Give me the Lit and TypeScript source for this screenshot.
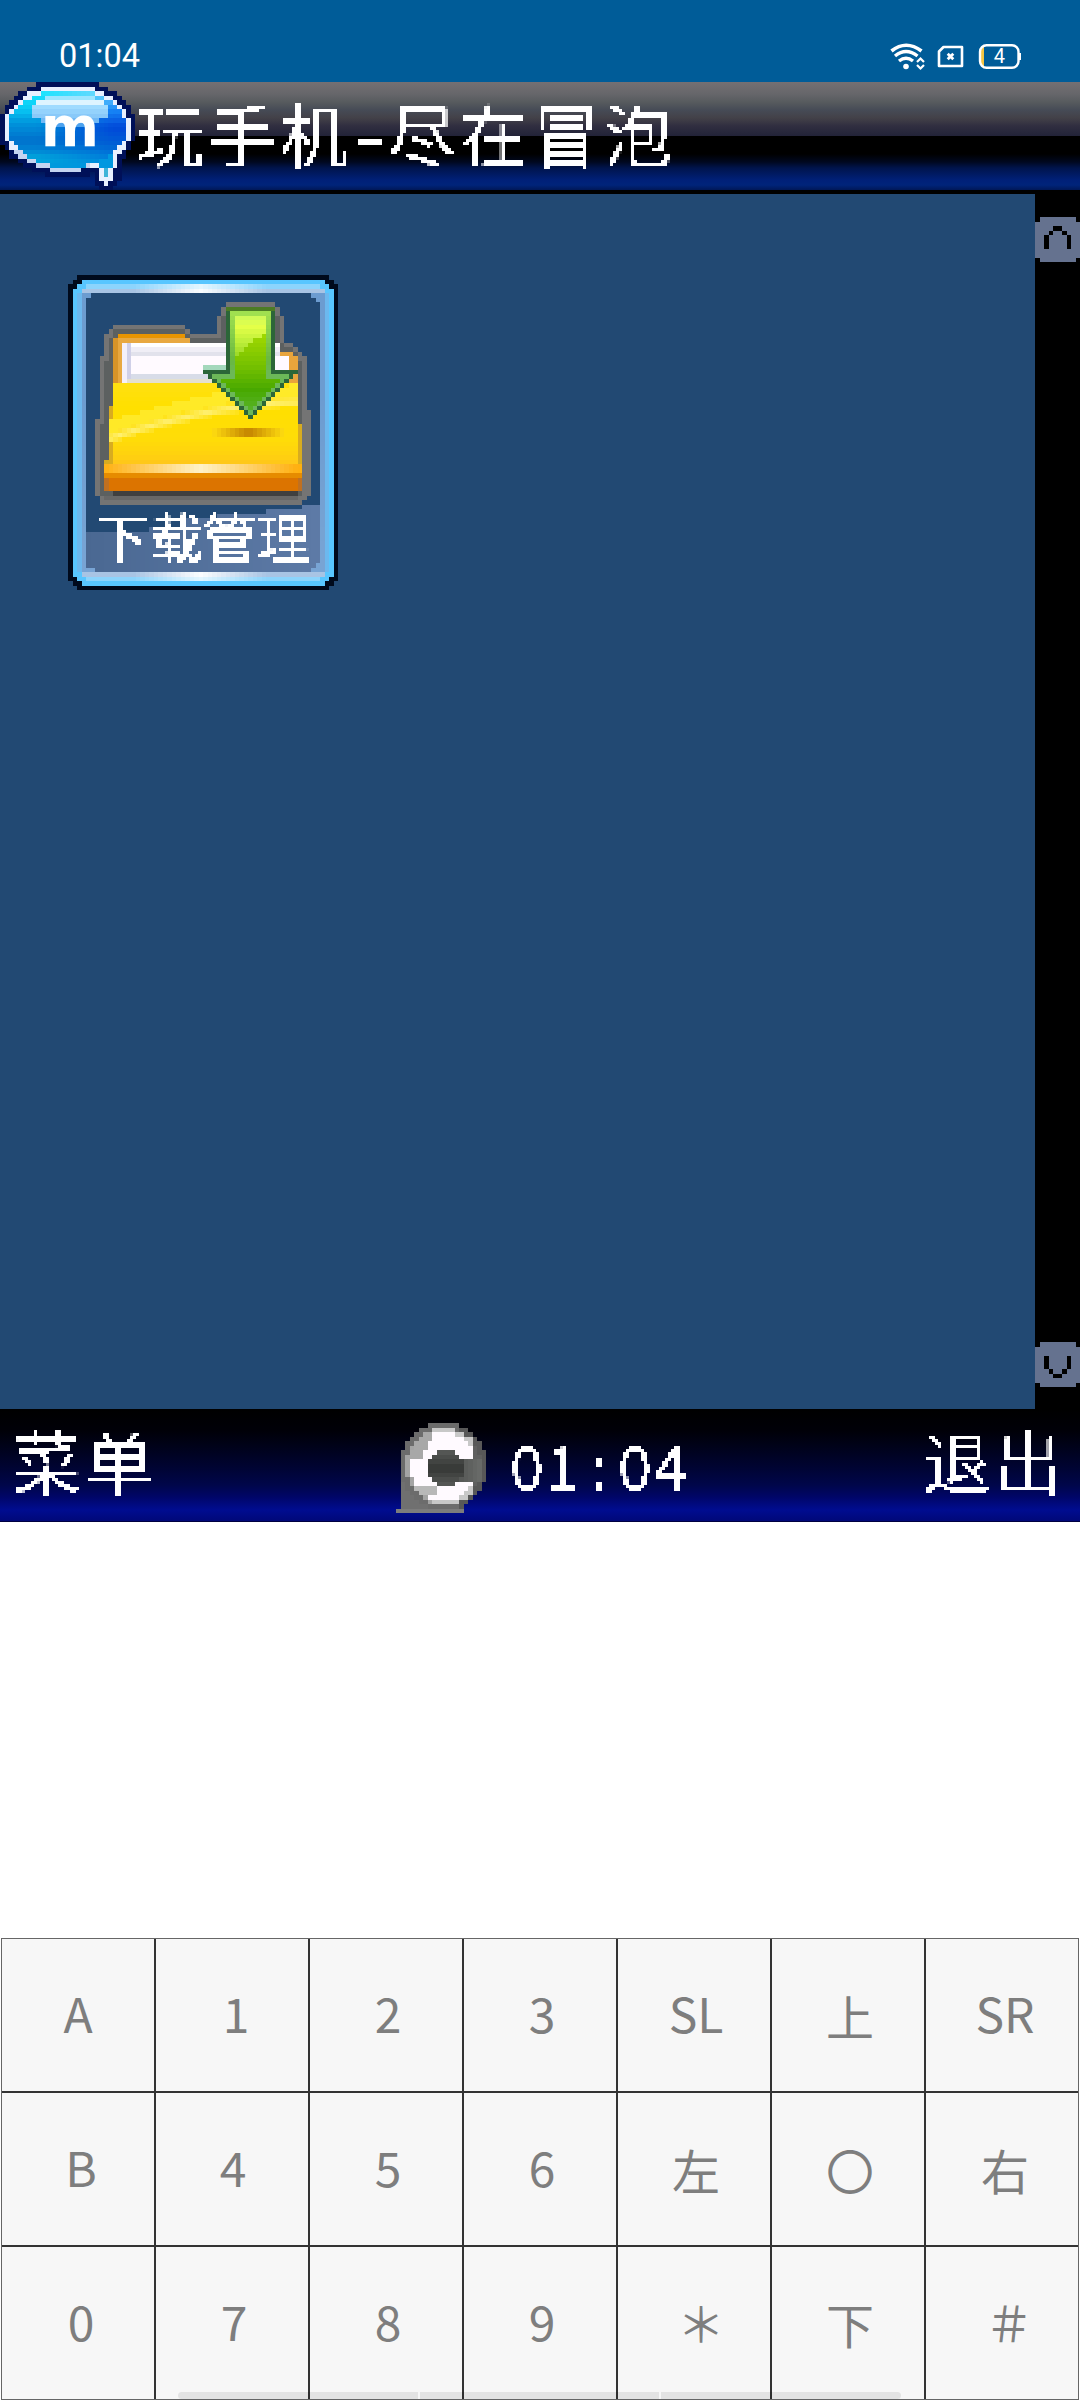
import { LitElement, html, svg, css } from "lit";
import { customElement } from "lit/decorators.js";

/* ---------- tiny sprite rasteriser ---------- */
type Pt = [number, number];
type Paint = (x: number, y: number) => string | null;
type RGB = [number, number, number];

const hex = (s: string): RGB => [1, 3, 5].map((i) => parseInt(s.slice(i, i + 2), 16)) as RGB;
const mix = (a: string, b: string, t: number): string => {
  const k = Math.max(0, Math.min(1, t));
  const p = hex(a), q = hex(b);
  return "#" + p.map((v, i) => Math.round(v + (q[i] - v) * k).toString(16).padStart(2, "0")).join("");
};
const ramp = (stops: [number, string][], v: number): string => {
  for (let i = 1; i < stops.length; i++)
    if (v <= stops[i][0]) return mix(stops[i - 1][1], stops[i][1], (v - stops[i - 1][0]) / (stops[i][0] - stops[i - 1][0]));
  return stops[stops.length - 1][1];
};
const inside = (p: Pt[], x: number, y: number): boolean => {
  let r = false;
  for (let i = 0, j = p.length - 1; i < p.length; j = i++)
    if (p[i][1] > y !== p[j][1] > y && x < ((p[j][0] - p[i][0]) * (y - p[i][1])) / (p[j][1] - p[i][1]) + p[i][0]) r = !r;
  return r;
};
const inRound = (x: number, y: number, l: number, t: number, r: number, b: number, c: number): boolean => {
  if (x < l || x > r || y < t || y > b) return false;
  const dx = Math.max(l + c - x, x - (r - c), 0), dy = Math.max(t + c - y, y - (b - c), 0);
  return dx * dx + dy * dy <= c * c;
};
const sprite = (w: number, h: number, paint: Paint) => {
  const out = [];
  for (let y = 0; y < h; y++) {
    let x = 0;
    while (x < w) {
      const c = paint(x + 0.5, y + 0.5);
      let n = 1;
      while (x + n < w && paint(x + n + 0.5, y + 0.5) === c) n++;
      if (c) out.push(svg`<rect x=${x} y=${y} width=${n} height="1" fill=${c}></rect>`);
      x += n;
    }
  }
  return html`<svg class="sprite" viewBox="0 0 ${w} ${h}" width=${w * 4.5} height=${h * 4.5} shape-rendering="crispEdges">${out}</svg>`;
};

/* speech bubble of the title bar */
const ell = (x: number, y: number, cx: number, cy: number, rx: number, ry: number) =>
  ((x - cx) / rx) ** 2 + ((y - cy) / ry) ** 2;
const bubble: Paint = (x, y) => {
  const tailN: Pt[] = [[20, 18], [28, 15], [26.2, 23], [24, 24.1], [22, 23.6], [21, 21.4]];
  const tailW: Pt[] = [[21.2, 18], [26.2, 16.5], [25, 21.5], [24, 23], [22.6, 22], [21.8, 20]];
  const tailB: Pt[] = [[22, 17], [25, 16], [24.2, 21], [23, 21]];
  const body = ell(x, y, 14.9, 10.2, 13.1, 8.7);
  if (body <= 1) {
    if (ell(x, y, 15.5, 6.2, 8.8, 3.6) <= 1) return ramp([[2.5, "#4fd0ff"], [4.4, "#e4f7ff"], [5.4, "#a0dcff"], [8, "#84c4f8"], [10, "#3c98ec"]], y);
    const left = ramp([[2, "#18e8ff"], [6, "#08c8f4"], [9, "#0094dc"], [13, "#0070cc"], [15, "#0084d4"], [17, "#00a8dc"], [19, "#0098dc"]], y);
    const right = ramp([[2, "#88e0ff"], [6, "#1888f8"], [10, "#0048d8"], [14, "#0060d4"], [19, "#0098e0"]], y);
    return mix(left, right, (x - 8) / 17);
  }
  if (inside(tailB, x, y)) return y > 19 ? "#40b4d8" : "#0098e0";
  if (ell(x, y, 14.9, 10.2, 14.1, 9.6) <= 1 || inside(tailW, x, y)) return y > 15 && x < 20 ? "#c4d4f0" : "#e8f0ff";
  if (ell(x, y, 14.9, 10.2, 15.3, 10.9) <= 1 || inside(tailN, x, y)) return "#001058";
  return null;
};

/* grey emblem in the bottom bar */
const emblem: Paint = (x, y) => {
  const d = Math.hypot(x - 10.6, (y - 9.6) * 0.98);
  if (y > 19 && x < 15) return "#7c7c7c";
  if (d > 9.6) return x < 7 && y > 13 && x > 1 ? "#707070" : null;
  if (d > 8.4) return x > 14 ? "#585858" : "#6c6c6c";
  if (ell(x, y, 11, 10, 4, 4) <= 1) return mix("#343634", "#585a58", Math.abs(y - 10) / 4);
  if (x > 11 && y > 8 && y < 13) return mix("#484a48", "#6a6c6a", (x - 11) / 8);
  if (x > 17) return "#606060";
  if (x < 8 && y < 8 && Math.abs(x + y * 0.5 - 8) < 1.4) return "#a8a8a8";
  if (x < 9 && y > 14 && y < 16.5) return "#b8b8b8";
  if (d > 7.5) return x < 8 ? "#a4a4a4" : "#c8c8c8";
  return "#fffaff";
};

/* highlighted launcher tile with the download folder */
const tile: Paint = (gx, gy) => {
  const x = gx * 13.5 + 54, y = gy * 13.5 + 45;
  const arrowOut: Pt[] = [[525, 140], [673, 140], [673, 330], [744, 330], [600, 478], [456, 330], [525, 330]];
  const arrowMid: Pt[] = [[540, 153], [660, 153], [660, 343], [722, 343], [600, 464], [478, 343], [540, 343]];
  const arrowIn: Pt[] = [[552, 166], [648, 166], [648, 356], [692, 356], [600, 447], [508, 356], [552, 356]];
  if (inside(arrowIn, x, y)) {
    const edge = 166 + 120 * Math.exp(-(x - 540) / 90);
    return y < edge + 20
      ? ramp([[160, "#c8f860"], [200, "#e4ff48"], [250, "#b8ec38"], [300, "#90d020"]], y)
      : ramp([[170, "#b0e800"], [240, "#98d400"], [320, "#74c000"], [390, "#48a800"], [450, "#58b428"]], y);
  }
  if (inside(arrowMid, x, y)) return ramp([[160, "#a0e050"], [300, "#68b840"], [340, "#6cb858"], [470, "#6cb858"]], y);
  if (inside(arrowOut, x, y)) return y < 153 ? "#4c7c24" : "#2c6638";
  if (y > 314 && y < 330 && x > 460 && x < 525) return "#a4d8bc";

  const front: Pt[] = [[188, 368], [740, 368], [757, 600], [757, 693], [162, 693], [172, 545]];
  if (inside(front, x, y)) {
    if (y > 652) return x < 175 || x > 743 ? "#c07020" : "#dc7400";
    if (y > 638) return "#e68c00";
    if (y > 611) return mix("#fff2c8", "#ffb010", Math.abs(x - 450) / 290);
    if (Math.abs(y - 518) < 14 && Math.abs(x - 594) < 108) return mix("#c48400", "#ffdc10", Math.abs(x - 594) / 108);
    const arc = 425 + 110 * ((745 - x) / 570) ** 1.7;
    const base = ramp([[370, "#ffe010"], [440, "#ffe000"], [540, "#ffdc08"], [590, "#ffd010"], [612, "#ffc41c"]], y);
    if (Math.abs(y - arc) < 16) return mix("#fff070", base, Math.abs(y - arc) / 20);
    if (y < arc && y > arc - 50) return mix(base, "#ffec30", 0.8);
    if (x < 186 || x > 743) return "#d8ac20";
    return base;
  }
  if (y >= 693 && y < 708 && x > 188 && x < 743) return "#404040";
  if (x > 210 && x < 713 && y > 248 && y < 368 && !(x > 687 && y < 290)) {
    if (x < 228 || y > 357) return x < 228 ? "#f4f0fa" : "#e4e0d0";
    if (x < 243) return "#d0d0e8";
    if (y > 343) return "#d8dce8";
    if (y > 288) return "#fffaff";
    if (y > 275) return "#e2e2ec";
    return y < 262 ? "#ffffff" : "#f0eef6";
  }
  const back: Pt[] = [[200, 220], [405, 220], [418, 250], [688, 250], [688, 276], [727, 276], [743, 305], [743, 370], [188, 370], [190, 250]];
  if (inside(back, x, y)) return y < 236 ? "#e89400" : x > 687 ? "#e8a43c" : x < 202 ? "#d89428" : "#e8a840";

  const shade: Pt[] = [[200, 195], [405, 195], [430, 222], [498, 222], [500, 168], [513, 168], [525, 127], [672, 127], [700, 168], [700, 235], [740, 262], [768, 300], [768, 450], [780, 450], [780, 705], [755, 735], [160, 735], [135, 705], [135, 585], [148, 370], [160, 235], [175, 208]];
  const shadeIn: Pt[] = [[200, 209], [400, 209], [420, 236], [512, 236], [512, 175], [535, 141], [665, 141], [687, 170], [687, 245], [730, 272], [755, 310], [755, 700], [745, 719], [170, 719], [150, 700], [150, 590], [162, 370], [174, 240], [188, 222]];
  if (inside(shadeIn, x, y)) return y > 700 ? "#686868" : "#5c6060";
  if (inside(shade, x, y)) return "#747474";

  if (inRound(x, y, 105, 99, 809, 935, 46)) {
    const sheen = x < 296 ? 814 : x < 390 ? 800 : x < 500 ? 775 : x < 650 ? 760 : x < 755 ? 747 : 735;
    return y > sheen ? mix("#4a6892", "#5d7aa6", (x - 105) / 700) : "#224973";
  }
  if (inRound(x, y, 81, 73, 836, 963, 44)) {
    const t = Math.abs(x - 450) / 200;
    if (y < 99 || y > 935) return (y > 86 && y < 99) || (y > 935 && y < 949) ? mix("#fbfdff", "#a8c4e4", t) : mix("#e4f6ff", "#8cd4fc", t);
    return x < 95 || x > 822 ? "#6cb8ee" : mix("#6c9cd0", "#78a4d4", (y - 400) / 500);
  }
  if (inRound(x, y, 67, 59, 850, 977, 50)) return "#58c6ff";
  if (inRound(x, y, 54, 45, 863, 990, 56)) return "#000a1c";
  return null;
};

/* scroll buttons, ten cells square */
const UP = ["", "", "45", "36", "27", "27", "27"];
const DOWN = ["", "", "", "27", "27", "27", "36", "45"];
const scrollButton = (rows: string[]): Paint => (x, y) => {
  const c = Math.floor(x), r = Math.floor(y);
  if ((c === 0 || c === 9) && (r === 0 || r === 9)) return null;
  return (rows[r] ?? "").includes(String(c)) ? "#000000" : "#65728f";
};

/* keypad: label, horizontal nudge, vertical nudge */
const KEYS: [string, number, number][] = [
  ["A", 0, -3], ["1", 4, -3], ["2", 2, -3], ["3", 2, -3], ["SL", 2, -3], ["上", 2, 0], ["SR", 3, -3],
  ["B", 3, -3], ["4", 1, -3], ["5", 2, -3], ["6", 2, -3], ["左", 2, 0], ["〇", 2, 0], ["右", 3, 0],
  ["0", 3, -3], ["7", 2, -3], ["8", 2, -3], ["9", 2, -3], ["＊", 7, -2], ["下", 2, 0], ["＃", 7, -2],
];

@customElement("app-root")
export class AppRoot extends LitElement {
  static styles = css`
    :host { display: block; width: 1080px; height: 2400px; background: #fff; overflow: hidden; position: relative;
      font-family: "Noto Sans CJK SC", "Noto Sans", sans-serif; }
    .sprite { display: block; flex: none; }
    .defs { position: absolute; width: 0; height: 0; }
    .status { height: 82px; box-sizing: border-box; background: #005c98; color: #fff; display: flex; justify-content: space-between;
      align-items: flex-start; padding: 38px 58px 0 59px; }
    .time { font: 400 32.5px/36px Roboto, sans-serif; }
    .status-icons { display: block; }
    .title { height: 112px; box-sizing: border-box; display: flex; border-bottom: 4px solid #000;
      background: linear-gradient(#747073 0, #66666a 12px, #575b5e 20px, #464b56 28px, #434148 36px, #302e40 44px, #222338 54px,
        #000 54px, #000 72px, #000820 80px, #00144c 86px, #002078 98px, #00247a 103px, #001858 108px); }
    .logo { position: relative; width: 135px; }
    .logo-letter { position: absolute; left: 0; top: 0; }
    .pixel { filter: url(#px); color: #fff; white-space: nowrap; }
    .title-text { font-size: 68px; line-height: 102px; letter-spacing: 4px; margin-left: 1px; height: 108px; }
    .dash { display: inline-block; width: 36px; letter-spacing: 0; text-align: center; transform: scaleX(1.5); }
    .main { display: flex; height: 1215px; background: #000; }
    .desk { width: 1035px; background: #224973; padding: 81px 0 0 67.5px; box-sizing: border-box; }
    .app { width: 270px; display: grid; }
    .app > * { grid-area: 1 / 1; }
    .app-name { align-self: end; margin: 0 0 21px 28px; font-size: 53px; line-height: 66px; letter-spacing: 1px;
      -webkit-text-stroke: 0.7px #fff; }
    .scroll { width: 45px; display: flex; flex-direction: column; justify-content: space-between; padding: 23px 0 22px; box-sizing: border-box; }
    .soft { height: 113px; display: flex; align-items: flex-start; box-sizing: border-box; padding: 0 13px 0 13px; border-bottom: 1px solid #000040;
      background: linear-gradient(#000 0, #000008 22px, #000218 36px, #000432 58px, #00064a 76px, #000668 88px, #000c90 101px, #000878 112px); }
    .soft-key { font-size: 68px; line-height: 102px; letter-spacing: 4px; }
    .centre { display: flex; flex: 1; padding: 14px 0 0 239px; }
    .clock { display: flex; margin: -10px 0 0 23px; font-size: 60px; line-height: 102px; }
    .clock span { width: 36px; text-align: center; }
    .keys { margin: 416px 1px 0 1px; height: 462px; box-sizing: border-box; display: grid; grid-template-columns: repeat(7, 152px);
      grid-template-rows: repeat(3, 152px); gap: 2px; background: #333; border: 1px solid #666; }
    .key { background: #f7f7f7; color: #7e7e7e; font-size: 48px; line-height: 1; display: flex; align-items: center; justify-content: center; }
    .gesture { position: absolute; left: 178px; top: 2392px; width: 723px; height: 7px; display: flex; gap: 2px; }
    .gesture i { background: rgba(0, 0, 0, 0.08); flex: 241; }
    .gesture i:first-child { border-radius: 4px 0 0 4px; }
    .gesture i:last-child { border-radius: 0 4px 4px 0; }
  `;

  private statusIcons() {
    return html`<svg class="status-icons" width="134" height="38" viewBox="888 38 134 38" fill="none" stroke="#fff" stroke-linecap="butt">
      <path d="M891.5 51 Q906 39.500 921.500 51" stroke-width="3.600"></path>
      <path d="M895 56 Q906 47 917.500 56" stroke-width="3.400"></path>
      <path d="M899 61 Q906 55.500 913 61" stroke-width="3.400"></path>
      <circle cx="906" cy="66.500" r="2.800" fill="#fff" stroke="none"></circle>
      <path d="M917 62 L920.500 58.500 L924 62 M917 65 L920.500 68.500 L924 65" stroke-width="2.200"></path>
      <path d="M943.500 47 H962 V66 H939 V51.500 Z" stroke-width="2.600" stroke-linejoin="round"></path>
      <path d="M947.700 53.700 L953.300 59.300 M953.300 53.700 L947.700 59.300" stroke-width="2.800"></path>
      <path d="M984 46 V67 H982.500 Q980.500 64 980.500 60 V53 Q980.500 49 984 46" fill="#f5c542" stroke="none"></path>
      <rect x="980" y="45.200" width="38.500" height="22.600" rx="6.500" stroke-width="2.400"></rect>
      <path d="M1019.500 53 V60" stroke-width="3"></path>
      <text x="999.300" y="63.300" font-family="Roboto, sans-serif" font-size="20" fill="#fff" stroke="none" text-anchor="middle">4</text>
    </svg>`;
  }

  render() {
    return html`
      <svg class="defs" aria-hidden="true">
        <filter id="px" x="0" y="0" width="100%" height="100%" primitiveUnits="userSpaceOnUse" color-interpolation-filters="sRGB">
          <feFlood x="1" y="1" width="1" height="1" flood-color="#fff" result="a"></feFlood>
          <feMerge x="0" y="0" width="3" height="3" result="cell"><feMergeNode in="a"></feMergeNode></feMerge>
          <feTile in="cell" result="grid"></feTile>
          <feComposite in="SourceGraphic" in2="grid" operator="in"></feComposite>
          <feComponentTransfer><feFuncA type="linear" slope="6" intercept="-2"></feFuncA></feComponentTransfer>
          <feMorphology operator="dilate" radius="1"></feMorphology>
        </filter>
      </svg>
      <div class="status"><span class="time">01:04</span>${this.statusIcons()}</div>
      <div class="title">
        <div class="logo">
          ${sprite(30, 24, bubble)}
          <svg class="logo-letter" width="135" height="108"><text x="70" y="64" text-anchor="middle" font-family="DejaVu Sans" font-weight="700" font-size="56" fill="#fff">m</text></svg>
        </div>
        <div class="title-text pixel">玩手机<span class="dash">-</span>尽在冒泡</div>
      </div>
      <div class="main">
        <div class="desk"><div class="app">${sprite(60, 70, tile)}<div class="app-name pixel">下载管理</div></div></div>
        <div class="scroll">${sprite(10, 10, scrollButton(UP))}${sprite(10, 10, scrollButton(DOWN))}</div>
      </div>
      <div class="soft">
        <div class="soft-key pixel">菜单</div>
        <div class="centre">${sprite(20, 20, emblem)}<div class="clock pixel">${[..."01:04"].map((c) => html`<span>${c}</span>`)}</div></div>
        <div class="soft-key pixel">退出</div>
      </div>
      <div class="keys">
        ${KEYS.map(([t, dx, dy]) => html`<div class="key"><span style="transform:translate(${dx}px,${dy}px)">${t}</span></div>`)}
      </div>
      <div class="gesture"><i></i><i></i><i></i></div>
    `;
  }
}
